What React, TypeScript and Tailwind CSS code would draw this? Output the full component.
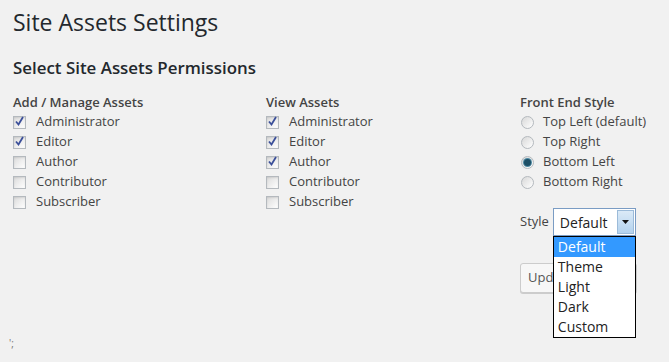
import React from "react";

const roles = ["Administrator", "Editor", "Author", "Contributor", "Subscriber"];
const manageChecked = ["Administrator", "Editor"];
const viewChecked = ["Administrator", "Editor", "Author"];
const positions = ["Top Left (default)", "Top Right", "Bottom Left", "Bottom Right"];
const styles = ["Default", "Theme", "Light", "Dark", "Custom"];

const Checkbox = ({ checked }: { checked: boolean }) => (
    <span className="relative inline-block h-[13px] w-[13px] border border-[#b4b9be] bg-gradient-to-br from-[#dcdcdc] to-white shadow-[inset_0_1px_2px_rgba(0,0,0,0.1)]">
        {checked && (
            <svg viewBox="0 0 13 13" className="absolute -left-px -top-[2px] h-[13px] w-[13px]">
                <path d="M3 6.5 L5.5 9.5 L10 2" fill="none" stroke="#3b4f9a" strokeWidth="1.8" />
            </svg>
        )}
    </span>
);

const Radio = ({ checked }: { checked: boolean }) => (
    <span className="flex h-[13px] w-[13px] items-center justify-center rounded-full border border-[#b4b9be] bg-gradient-to-br from-[#d8d8d8] to-white">
        {checked && <span className="h-[7px] w-[7px] rounded-full bg-[#1d4f66] shadow-[0_0_0_1px_#4d8aa3]" />}
    </span>
);

const RoleColumn = ({ title, checked }: { title: string; checked: string[] }) => (
    <div className="flex flex-col">
        <h4 className="mb-[1px] h-[17px] text-[13px] font-semibold leading-[17px] text-[#444]">{title}</h4>
        {roles.map((role) => (
            <label key={role} className="flex h-[20px] items-center gap-[10px] text-[13px] text-[#444]">
                <Checkbox checked={checked.includes(role)} />
                <span>{role}</span>
            </label>
        ))}
    </div>
);

export default function App() {
    return (
        <div className="h-[362px] w-[669px] overflow-hidden bg-[#f1f1f1] pl-[13px] font-['Open_Sans',sans-serif] text-[#444]">
            <h2 className="pt-[8px] text-[23px] leading-[29px] text-[#23282d]">Site Assets Settings</h2>
            <h3 className="mt-[20px] text-[16.9px] font-semibold leading-[22px] text-[#23282d]">
                Select Site Assets Permissions
            </h3>
            <div className="mt-[15px] grid grid-cols-[253px_254px_1fr]">
                <RoleColumn title="Add / Manage Assets" checked={manageChecked} />
                <RoleColumn title="View Assets" checked={viewChecked} />
                <div className="flex flex-col">
                    <h4 className="mb-[1px] h-[17px] text-[13px] font-semibold leading-[17px]">Front End Style</h4>
                    {positions.map((p) => (
                        <label key={p} className="flex h-[20px] items-center gap-[9px] pl-px text-[13px]">
                            <Radio checked={p === "Bottom Left"} />
                            <span>{p}</span>
                        </label>
                    ))}
                    <div className="relative mt-[16px] flex items-center gap-[4px] text-[13px]">
                        <span>Style</span>
                        <div className="relative flex h-[28px] w-[83px] items-center border border-[#7a9cc4] bg-white">
                            <span className="pl-[6px] text-[14px] text-[#222]">Default</span>
                            <span className="absolute right-px top-px flex h-[24px] w-[17px] items-center justify-center border border-[#9cbbd9] bg-gradient-to-b from-[#dbeaf7] to-[#b3d2ee]">
                                <svg viewBox="0 0 7 4" className="h-[4px] w-[7px]">
                                    <path d="M0 0 H7 L3.5 4 Z" fill="#111" />
                                </svg>
                            </span>
                            <ul className="absolute left-[-1px] top-[27px] z-10 w-[83px] border border-black bg-white text-[14px] text-[#222]">
                                {styles.map((s) => (
                                    <li
                                        key={s}
                                        className={`h-[20px] pl-[4px] leading-[20px] ${s === "Default" ? "bg-[#3399ff] text-white" : ""}`}
                                    >
                                        {s}
                                    </li>
                                ))}
                            </ul>
                        </div>
                    </div>
                    <button className="mt-[27px] h-[30px] w-[117px] rounded-[3px] border border-[#ccc] bg-[#f7f7f7] px-[7px] text-left text-[13px] text-[#555] shadow-[0_1px_0_#ccc]">
                        Update Settings
                    </button>
                </div>
            </div>
            <p className="ml-[-4px] mt-[44px] text-[10px] leading-[12px] text-[#777]">';</p>
        </div>
    );
}
